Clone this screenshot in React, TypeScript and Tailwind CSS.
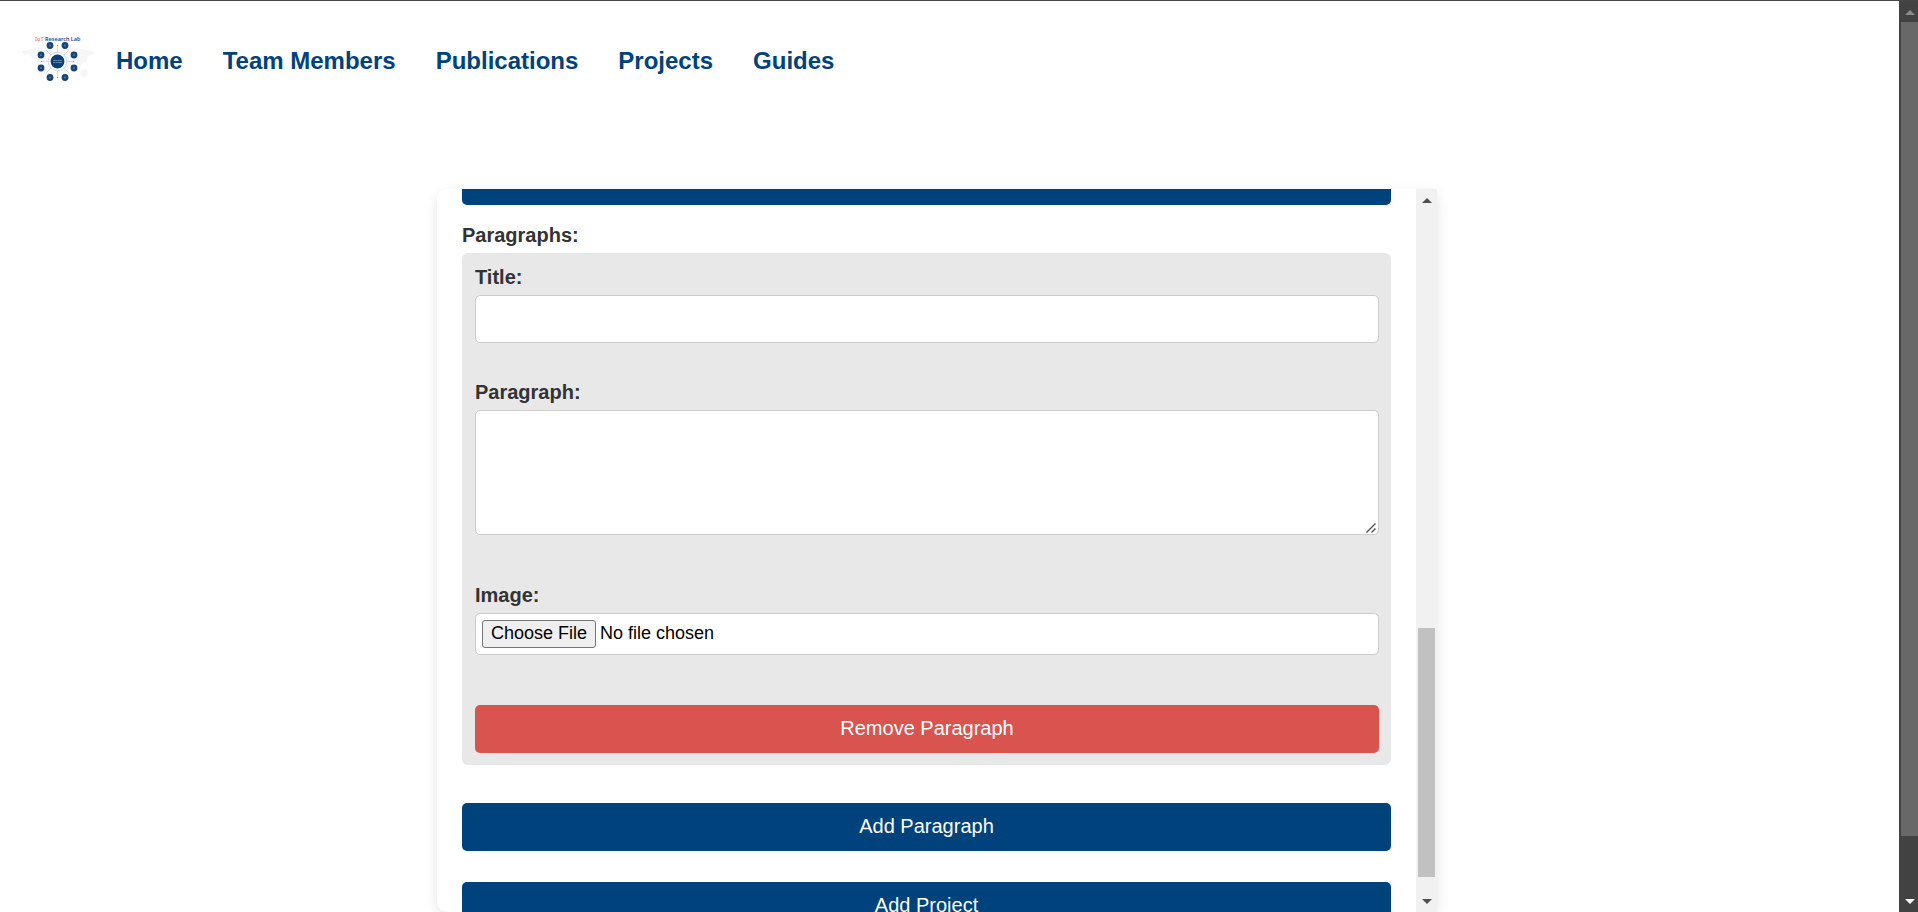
const links = ["Home", "Team Members", "Publications", "Projects", "Guides"];

const nodes = [
  [50, 45.5],
  [65, 45.5],
  [41, 55],
  [74, 55],
  [41, 68],
  [74, 68],
  [50, 77.5],
  [65, 77.5],
];

function Logo() {
  return (
    <svg viewBox="20 24 76 76" className="size-19 shrink-0" role="img" aria-label="IoT Research Lab">
      <g fill="#f6f6f6">
        <path d="M22 52l5-2 8-2 10-1 6 2-2 4-5 3-3 5-4 2-4-4-4-5-4 1z" />
        <path d="M38 64l7 1 2 4-4 5-2 5-2-6z" />
        <path d="M58 50l4-3 8-1 10 3 13 2 1 3-6 2-2 6-4 1-2 4-4-4-5 1-4 8-4 3-3-8-4-4z" />
        <path d="M80 72l5-3 4 4-3 4-5-1z" />
      </g>
      <text x="35" y="40.500" className="font-[Noto_Sans] text-[5.5px] font-semibold" fill="#1c4f86">
        <tspan fill="#f68a68">IoT</tspan> Research Lab
      </text>
      <g stroke="#c3d1de" strokeWidth="0.700">
        <path d="M57.500 46v32M41.500 61.500h32M46 50l23 23M69 50L46 73" />
      </g>
      <g fill="#7f9db8">
        <circle cx="57.500" cy="45.500" r="0.700" />
        <circle cx="57.500" cy="77.500" r="0.700" />
        <circle cx="41.500" cy="61.500" r="0.700" />
        <circle cx="73.500" cy="61.500" r="0.700" />
      </g>
      <circle cx="57.500" cy="61.500" r="9.300" fill="#fff" stroke="#d3dde6" strokeWidth="1" />
      <circle cx="57.500" cy="61.500" r="6.900" fill="#0b3f78" />
      <text textAnchor="middle" className="font-[Noto_Sans] text-[2px] font-bold" fill="#b8c8d8">
        <tspan x="57.500" y="61.300">Internet</tspan>
        <tspan x="57.500" y="63.300">of Things</tspan>
      </text>
      {nodes.map(([x, y]) => (
        <g key={`${x}-${y}`}>
          <circle cx={x} cy={y} r="3.400" fill="#174474" />
          <path d={`M${x - 1} ${y + 1}v-1.500l1-1 1 1v1.500z`} fill="#436a92" />
        </g>
      ))}
    </svg>
  );
}

function Arrow({ down = false, className = "" }: { down?: boolean; className?: string }) {
  return (
    <svg viewBox="0 0 10 5" className={`h-[5px] w-[10px] shrink-0 ${className}`} aria-hidden="true">
      <path d={down ? "M0 0h10L5 5z" : "M0 5h10L5 0z"} fill="currentColor" />
    </svg>
  );
}

const label = "mb-1.5 block text-xl leading-6 font-bold text-[#333]";
const field = "block w-full rounded-[5px] border border-[#ccc] bg-white";
const button = "flex h-12 w-full shrink-0 items-center justify-center rounded-[5px] pb-0.5 text-xl leading-6 text-white";

export default function App() {
  return (
    <div className="flex h-screen flex-col overflow-hidden border-t border-[#454545] bg-white font-[Liberation_Sans,Arial,sans-serif]">
      <div className="flex min-h-0 flex-1">
        <div className="flex min-w-0 flex-1 flex-col">
          <header className="flex h-[121px] shrink-0 items-center px-5">
            <Logo />
            <nav className="ml-5 flex gap-10 pb-0.5">
              {links.map((name) => (
                <a key={name} href="#" className="text-2xl font-bold text-[#00427c]">
                  {name}
                </a>
              ))}
            </nav>
          </header>

          <main className="flex min-h-0 flex-1 justify-center pt-[67px] pr-[25px]">
            <div className="flex w-full max-w-[1000px] rounded-l-[10px] bg-white shadow-[0_5px_14px_rgba(0,0,0,0.1)]">
              <form className="flex min-w-0 flex-1 flex-col overflow-hidden px-[25px]" onSubmit={(e) => e.preventDefault()}>
                <button type="button" aria-label="Add" className="h-4 w-full shrink-0 rounded-b-[5px] bg-[#00427c]" />
                <fieldset className="mt-[18px] shrink-0">
                  <legend className={label}>Paragraphs:</legend>
                  <div className="rounded-[6px] bg-[#e8e8e8] py-3 pr-3 pl-[13px]">
                    <label htmlFor="title" className={label}>Title:</label>
                    <input id="title" type="text" className={`${field} h-12 px-3 text-xl`} />

                    <label htmlFor="paragraph" className={`${label} mt-[37px]`}>Paragraph:</label>
                    <div className="relative">
                      <textarea id="paragraph" className={`${field} h-[125px] resize-none px-3 py-2 text-xl`} />
                      <svg viewBox="0 0 10 10" className="pointer-events-none absolute right-[3px] bottom-0.5 size-2.5" aria-hidden="true">
                        <path d="M0.500 9.500l9-9M5.500 9.500l4-4" stroke="#505050" strokeWidth="1.400" fill="none" />
                      </svg>
                    </div>

                    <label htmlFor="image" className={`${label} mt-12`}>Image:</label>
                    <input
                      id="image"
                      type="file"
                      className={`${field} h-[42px] p-1.5 text-lg leading-5 text-black file:mr-1 file:h-7 file:rounded-[3px] file:border file:border-solid file:border-[#767676] file:bg-[#efefef] file:px-2 file:pb-0.5 file:text-lg file:leading-5 file:text-black`}
                    />

                    <button type="button" className={`${button} mt-[50px] bg-[#d9534f]`}>Remove Paragraph</button>
                  </div>
                </fieldset>
                <button type="button" className={`${button} mt-[38px] bg-[#00427c]`}>Add Paragraph</button>
                <button type="submit" className={`${button} mt-[31px] bg-[#00427c]`}>Add Project</button>
              </form>

              <div className="flex w-[21px] shrink-0 flex-col items-center bg-[#f1f1f1] pt-[9px] pb-2 text-[#505050]" aria-hidden="true">
                <Arrow />
                <div className="flex w-full flex-1 flex-col px-0.5 pt-2 pb-[22px]">
                  <div className="flex-[417]" />
                  <div className="flex-[249] bg-[#c1c1c1]" />
                </div>
                <Arrow down />
              </div>
            </div>
          </main>
        </div>

        <div className="flex w-[19px] shrink-0 flex-col items-center bg-[#424242] pt-[9px] pb-2" aria-hidden="true">
          <Arrow className="ml-0.5 text-[#8b8b8b]" />
          <div className="flex w-full flex-1 flex-col pt-[7px] pb-[22px] pl-0.5">
            <div className="flex-[814] bg-[#686868]" />
            <div className="flex-[41]" />
          </div>
          <Arrow down className="ml-0.5 text-white" />
        </div>
      </div>
    </div>
  );
}
